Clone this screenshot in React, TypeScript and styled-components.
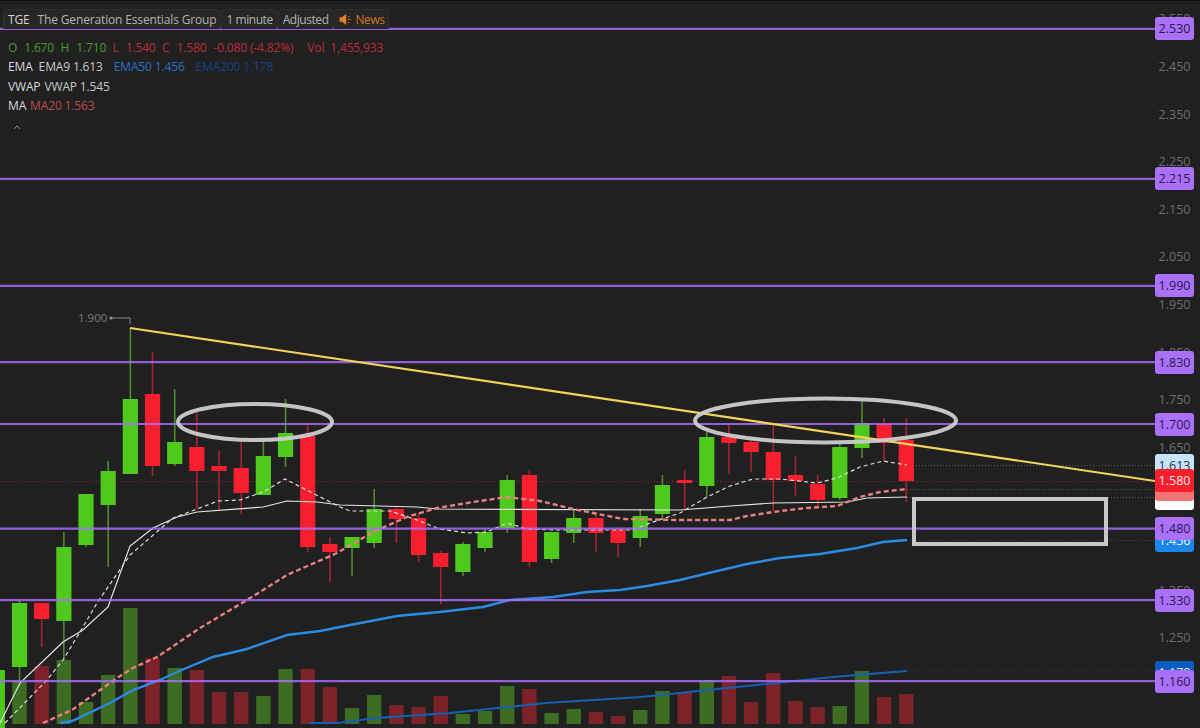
import React from "react";
import styled, { createGlobalStyle } from "styled-components";

/* pixel scale of the price axis */
const priceY = (p: number) => 67 + (2.45 - p) * 476;

type Candle = { up: boolean; top: number; bottom: number; high: number; low: number; vol: number };

const c = (up: number, top: number, bottom: number, high: number, low: number, vol: number): Candle => ({
  up: up === 1,
  top,
  bottom,
  high,
  low,
  vol,
});

const CANDLE_X0 = 19.5;
const CANDLE_STEP = 22.17;
const BAR_BOTTOM = 724;

const candles: Candle[] = [
  c(1, 670, 730, 670, 730, 724),
  c(1, 603, 667, 600, 682, 681),
  c(0, 603, 619, 603, 647, 666),
  c(1, 547, 621, 532, 660, 660),
  c(1, 494, 545, 494, 547, 702),
  c(1, 471, 505, 461, 567, 675),
  c(1, 399, 474, 328, 474, 608),
  c(0, 394, 466, 352, 476, 658),
  c(1, 442, 464, 389, 466, 668),
  c(0, 447, 471, 413, 509, 670),
  c(0, 466, 471, 451, 510, 692),
  c(0, 468, 493, 442, 514, 692),
  c(1, 456, 495, 441, 495, 696),
  c(1, 433, 457, 399, 467, 669),
  c(0, 436, 547, 424, 552, 669),
  c(0, 544, 552, 537, 582, 687),
  c(1, 537, 548, 537, 576, 708),
  c(1, 509, 543, 489, 548, 695),
  c(0, 509, 519, 507, 543, 705),
  c(0, 518, 555, 513, 562, 707),
  c(0, 553, 567, 551, 604, 696),
  c(1, 544, 572, 542, 576, 714),
  c(1, 532, 548, 528, 552, 711),
  c(1, 480, 528, 475, 533, 686),
  c(0, 475, 562, 470, 567, 689),
  c(1, 532, 559, 532, 563, 713),
  c(1, 518, 533, 510, 543, 709),
  c(0, 518, 533, 513, 552, 712),
  c(0, 530, 543, 528, 557, 716),
  c(1, 516, 538, 509, 547, 710),
  c(1, 485, 514, 475, 518, 691),
  c(0, 480, 483, 470, 510, 693),
  c(1, 437, 486, 430, 497, 680),
  c(0, 437, 443, 423, 474, 676),
  c(0, 442, 452, 437, 472, 702),
  c(0, 452, 480, 425, 511, 673),
  c(0, 475, 481, 456, 496, 701),
  c(0, 484, 500, 475, 508, 707),
  c(1, 447, 498, 443, 500, 706),
  c(1, 423, 448, 400, 458, 671),
  c(0, 424, 443, 418, 461, 697),
  c(0, 440, 481, 418, 502, 694),
];

const ema200 = "310,723 337,723 377,718 450,713 546,703 641,697 737,687 833,677 907,671";
const ema50 =
  "60,723 72,721 110,703 133,690 160,680 177,672 213,657 247,649 287,635 320,631 350,625 397,616 440,612 483,607 510,600 553,597 587,592 620,590 647,586 680,580 713,572 747,564 780,558 820,554 857,548 883,542 907,540";
const vwap =
  "0,723 20,683 63,642 83,630 108,607 130,546 153,528 177,517 197,512 263,507 287,501 317,502 340,505 417,507 437,509 680,510 730,506 773,503 847,502 867,498 907,497";
const ema9 =
  "5,723 47,680 63,660 80,632 97,603 130,555 173,518 197,509 218,501 240,500 263,492 285,479 340,507 350,511 390,511 417,520 440,529 467,533 487,532 507,523 527,529 557,530 633,530 650,523 680,513 707,497 730,486 753,479 780,479 817,483 837,478 860,467 883,461 907,465";
const ma20 =
  "43,723 72,710 117,678 133,668 157,657 200,628 247,600 287,575 337,553 373,532 407,517 437,508 473,502 507,497 540,501 573,509 623,519 680,520 730,520 747,516 780,511 807,508 837,506 860,497 880,492 907,489";

const levels = [2.53, 2.215, 1.99, 1.83, 1.7, 1.48, 1.33, 1.16];
const axisTicks = ["2.550", "2.450", "2.350", "2.250", "2.150", "2.050", "1.950", "1.850", "1.750", "1.650", "1.350", "1.250"];

const tails = [
  { y: 481, from: 0, color: "#a8303a" },
  { y: 465, from: 907, color: "#777777" },
  { y: 489, from: 907, color: "#9c5a5a" },
  { y: 497, from: 907, color: "#777777" },
  { y: 540, from: 907, color: "#2a5f95" },
  { y: 671, from: 907, color: "#1c3f6a" },
];

const GlobalStyle = createGlobalStyle`
  html, body {
    margin: 0;
    padding: 0;
    background: #202020;
  }
`;

const Frame = styled.div`
  display: grid;
  grid-template-columns: 1155px 45px;
  width: 1200px;
  height: 728px;
  overflow: hidden;
  background: #202020;
  border-top: 1px solid #0c0c0c;
  box-sizing: border-box;
  font-family: "Open Sans", "Liberation Sans", sans-serif;
`;

const Plot = styled.div`
  position: relative;
  height: 728px;
  overflow: hidden;
`;

const ChartSvg = styled.svg`
  position: absolute;
  inset: -1px 0 0 0;
`;

const Legend = styled.div`
  position: relative;
  display: flex;
  flex-direction: column;
  padding: 8px 0 0 3px;
  font-size: 12px;
  letter-spacing: -0.15px;
`;

const Header = styled.div`
  display: flex;
  align-items: stretch;
  gap: 1px;
  width: 388px;
  height: 20px;
  margin-bottom: 9px;
`;

const HeaderCell = styled.div<{ $orange?: boolean; $tight?: boolean }>`
  display: flex;
  flex: none;
  align-items: center;
  gap: 4px;
  padding: 0 3px 0 4px;
  background: #262626;
  border: 1px solid #2f2f2f;
  border-bottom: none;
  border-radius: 3px 3px 0 0;
  white-space: nowrap;
  letter-spacing: ${({ $tight }) => ($tight ? "-0.45px" : "inherit")};
  color: ${({ $orange }) => ($orange ? "#cf7426" : "#b4b4b4")};
`;

const Symbol = styled.span`
  color: #d4d4d4;
  margin-right: 4px;
`;

const Row = styled.div`
  display: flex;
  align-items: center;
  height: 19.3px;
  padding-left: 5px;
  white-space: nowrap;
`;

const Study = styled.span<{ $color: string; $gap?: number }>`
  color: ${({ $color }) => $color};
  margin-right: ${({ $gap }) => $gap ?? 5}px;
`;

const Collapse = styled.div`
  display: flex;
  padding: 9px 0 0 9px;
`;

const Axis = styled.div`
  position: relative;
  height: 728px;
`;

const Tick = styled.span`
  position: absolute;
  left: 0;
  width: 39px;
  text-align: center;
  font-size: 12.5px;
  line-height: 16px;
  margin-top: -8px;
  color: #6f6f6f;
`;

const Tag = styled.span<{ $bg: string; $fg?: string; $h?: number }>`
  position: absolute;
  left: 0;
  width: 39px;
  height: ${({ $h }) => $h ?? 23}px;
  margin-top: ${({ $h }) => -($h ?? 23) / 2}px;
  border-radius: 3px;
  background: ${({ $bg }) => $bg};
  color: ${({ $fg }) => $fg ?? "#222"};
  font-size: 12.5px;
  line-height: ${({ $h }) => $h ?? 23}px;
  text-align: center;
`;

function Speaker() {
  return (
    <svg width="13" height="13" viewBox="0 0 13 13">
      <path d="M0.5 4.2H3L7.2 1V12L3 8.8H0.5Z" fill="#e8801f" />
      <path d="M9 3.6h2M9 6.5h3M9 9.4h2" stroke="#e8801f" strokeWidth="1" strokeDasharray="1.4 0.8" />
    </svg>
  );
}

function Chevron() {
  return (
    <svg width="10" height="7" viewBox="0 0 10 7">
      <path d="M2 5L5 2L8 5" stroke="#8a8a8a" fill="none" strokeWidth="1" />
    </svg>
  );
}

function Chart() {
  return (
    <ChartSvg width="1155" height="729" viewBox="0 0 1155 729">
      {/* volume */}
      {candles.map((k, i) => (
        <rect
          key={i}
          x={CANDLE_X0 + (i - 1) * CANDLE_STEP - 7.2}
          y={k.vol}
          width="14.4"
          height={Math.max(BAR_BOTTOM - k.vol, 0)}
          fill={k.up ? "#3c6d22" : "#7c2229"}
        />
      ))}

      <polyline points={ema200} fill="none" stroke="#1560b4" strokeWidth="2" />
      <polyline points={ema50} fill="none" stroke="#2b8be4" strokeWidth="2.4" />

      {/* dotted price lines out to the axis */}
      {tails.map((t) => (
        <line key={t.y} x1={t.from} x2="1155" y1={t.y + 0.5} y2={t.y + 0.5} stroke={t.color} strokeWidth="1" strokeDasharray="1 2" opacity="0.7" />
      ))}

      {/* candles */}
      {candles.map((k, i) => {
        const x = CANDLE_X0 + (i - 1) * CANDLE_STEP;
        return (
          <g key={i}>
            <line x1={x} x2={x} y1={k.high} y2={k.low} stroke={k.up ? "#4f8a2b" : "#a3262f"} strokeWidth="1.6" />
            <rect x={x - 7.6} y={k.top} width="15.2" height={k.bottom - k.top} rx="0.5" fill={k.up ? "#4fc91b" : "#f8202f"} />
          </g>
        );
      })}

      <polyline points={vwap} fill="none" stroke="#e6e6e6" strokeWidth="1.2" />
      <polyline points={ema9} fill="none" stroke="#dcdcdc" strokeWidth="1.2" strokeDasharray="4 3" />
      <polyline points={ma20} fill="none" stroke="#ea8080" strokeWidth="2.4" strokeDasharray="5 3" />

      {levels.map((p) => (
        <line key={p} x1="0" x2="1155" y1={priceY(p)} y2={priceY(p)} stroke="#ac6eff" strokeWidth="2.2" opacity="0.82" />
      ))}

      <line x1="130" y1="328" x2="1155" y2="481" stroke="#f3d35a" strokeWidth="2.2" />

      {/* hand-drawn markups */}
      <ellipse cx="255" cy="422" rx="77" ry="18" fill="none" stroke="#cdcdcd" strokeWidth="4" opacity="0.95" />
      <ellipse cx="825.5" cy="420.5" rx="130.5" ry="22" fill="none" stroke="#cdcdcd" strokeWidth="4" opacity="0.95" />
      <rect x="914" y="499" width="192" height="45" fill="none" stroke="#c8c8c8" strokeWidth="4" />

      {/* session high label */}
      <text x="78" y="322" fontSize="11.5" fill="#7c7c7c" fontFamily="Open Sans, sans-serif">
        1.900
      </text>
      <circle cx="111" cy="318" r="1.6" fill="#9a9a9a" />
      <path d="M111 318H130V324" fill="none" stroke="#8a8a8a" strokeWidth="1" />
    </ChartSvg>
  );
}

export default function App() {
  return (
    <>
      <GlobalStyle />
      <Frame>
        <Plot>
          <Chart />
          <Legend>
            <Header>
              <HeaderCell>
                <Symbol>TGE</Symbol>The Generation Essentials Group
              </HeaderCell>
              <HeaderCell $tight>1 minute</HeaderCell>
              <HeaderCell $tight>Adjusted</HeaderCell>
              <HeaderCell $orange $tight>
                <Speaker />
                News
              </HeaderCell>
            </Header>
            <Row>
              <Study $color="#4a9a2a" $gap={7}>O</Study>
              <Study $color="#4a9a2a" $gap={6.5}>1.670</Study>
              <Study $color="#4a9a2a" $gap={7}>H</Study>
              <Study $color="#4a9a2a" $gap={6.5}>1.710</Study>
              <Study $color="#bd2b37" $gap={7}>L</Study>
              <Study $color="#bd2b37" $gap={6.5}>1.540</Study>
              <Study $color="#bd2b37" $gap={7}>C</Study>
              <Study $color="#bd2b37" $gap={7}>1.580</Study>
              <Study $color="#bd2b37" $gap={14}>-0.080 (-4.82%)</Study>
              <Study $color="#bd2b37" $gap={6}>Vol</Study>
              <Study $color="#bd2b37">1,455,933</Study>
            </Row>
            <Row>
              <Study $color="#d8d8d8" $gap={6}>EMA</Study>
              <Study $color="#c8c8c8" $gap={11}>EMA9 1.613</Study>
              <Study $color="#2472c4" $gap={11}>EMA50 1.456</Study>
              <Study $color="#134388">EMA200 1.178</Study>
            </Row>
            <Row>
              <Study $color="#d8d8d8" $gap={4}>VWAP</Study>
              <Study $color="#c8c8c8">VWAP 1.545</Study>
            </Row>
            <Row>
              <Study $color="#d8d8d8" $gap={4}>MA</Study>
              <Study $color="#bb4c4c">MA20 1.563</Study>
            </Row>
            <Collapse>
              <Chevron />
            </Collapse>
          </Legend>
        </Plot>
        <Axis>
          {axisTicks.map((t) => (
            <Tick key={t} style={{ top: priceY(parseFloat(t)) - 1 }}>
              {t}
            </Tick>
          ))}
          <Tag $bg="#0b5cc0" $fg="#dfeaff" style={{ top: 671 }}>1.178</Tag>
          <Tag $bg="#1a87e8" $fg="#e8f4ff" style={{ top: 539 }}>1.456</Tag>
          <Tag $bg="#ffffff" style={{ top: 497 }} />
          <Tag $bg="#f47474" style={{ top: 488 }} />
          <Tag $bg="#c6e5fc" $fg="#2a3440" style={{ top: 464 }}>1.613</Tag>
          <Tag $bg="#f8202f" $fg="#ffe8e8" style={{ top: 479.5 }}>1.580</Tag>
          {levels.map((p) => (
            <Tag key={p} $bg="#aa70f8" $fg="#2a1650" style={{ top: priceY(p) - 1 }}>
              {p.toFixed(3)}
            </Tag>
          ))}
        </Axis>
      </Frame>
    </>
  );
}
